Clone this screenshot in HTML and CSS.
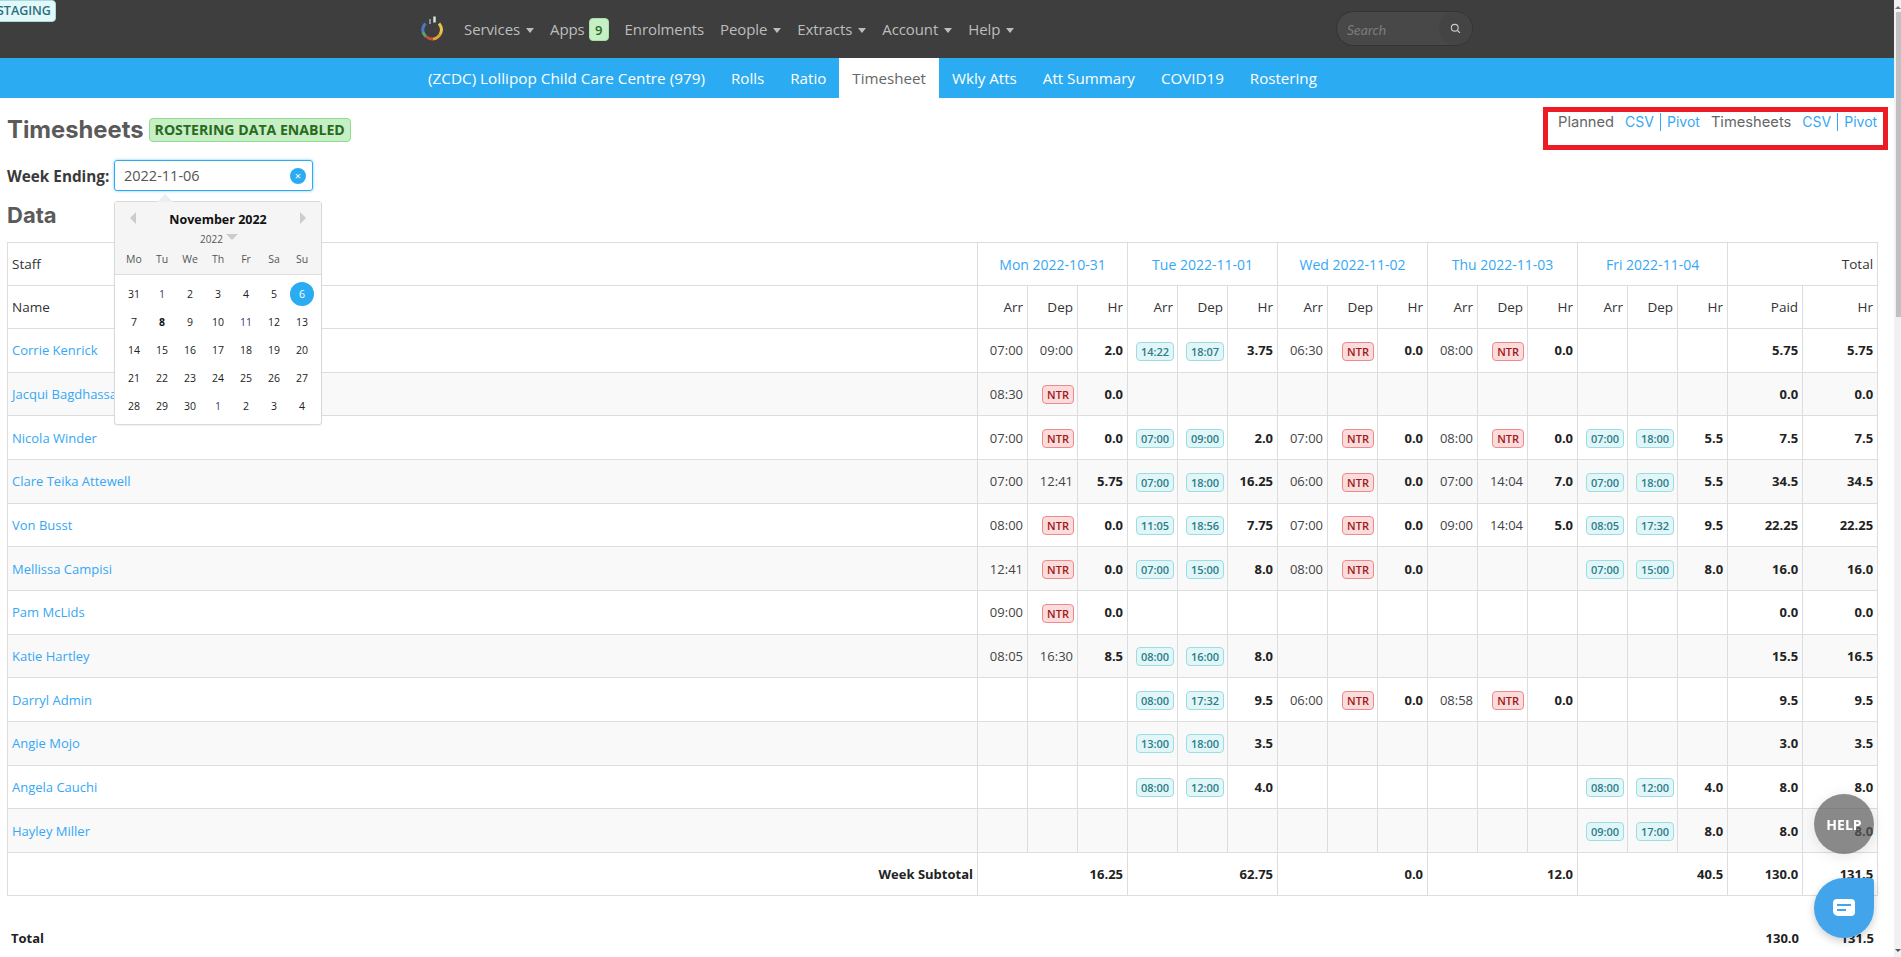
FILE: index.html
```html
<!DOCTYPE html>
<html lang="en">
<head>
<meta charset="utf-8">
<title>Timesheets</title>
<link rel="stylesheet" href="styles.css">
</head>
<body>
<span class="staging">STAGING</span>
<header class="topbar">
  <svg class="logo" viewBox="0 0 24 26" width="24" height="26" aria-hidden="true">
    <path d="M5.5 8.5A9.5 9.5 0 0 0 3 17" fill="none" stroke="#4a78c8" stroke-width="3"/>
    <path d="M3 17A9.5 9.5 0 0 0 6 21.5" fill="none" stroke="#5fa070" stroke-width="3"/>
    <path d="M6 21.5A9.5 9.5 0 0 0 13 24" fill="none" stroke="#c0503a" stroke-width="3"/>
    <path d="M13 24A9.5 9.5 0 0 0 20 19.5" fill="none" stroke="#e8a030" stroke-width="3"/>
    <path d="M20 19.5A9.5 9.5 0 0 0 19 8.5" fill="none" stroke="#e6c44a" stroke-width="3"/>
    <path d="M10 4V9" stroke="#8a8f9a" stroke-width="2" fill="none"/>
    <path d="M14.5 1.5V7.5" stroke="#dfe8df" stroke-width="2.4" fill="none"/>
  </svg>
  <nav class="topnav">
    <a class="topnav-item">Services<i class="caret"></i></a>
    <a class="topnav-item">Apps<b class="count">9</b></a>
    <a class="topnav-item">Enrolments</a>
    <a class="topnav-item">People<i class="caret"></i></a>
    <a class="topnav-item">Extracts<i class="caret"></i></a>
    <a class="topnav-item">Account<i class="caret"></i></a>
    <a class="topnav-item">Help<i class="caret"></i></a>
  </nav>
  <div class="search">
    <span class="search-text">Search</span>
    <span class="search-btn">
      <svg viewBox="0 0 12 12" width="11" height="11" aria-hidden="true"><circle cx="5.2" cy="5.2" r="3.7" fill="none" stroke="#ccc" stroke-width="1.2"/><path d="M8 8l2.8 2.8" stroke="#ccc" stroke-width="1.4"/></svg>
    </span>
  </div>
</header>
<nav class="subnav">
  <a class="subnav-item site">(ZCDC) Lollipop Child Care Centre (979)</a>
  <a class="subnav-item">Rolls</a>
  <a class="subnav-item">Ratio</a>
  <a class="subnav-item active">Timesheet</a>
  <a class="subnav-item">Wkly Atts</a>
  <a class="subnav-item">Att Summary</a>
  <a class="subnav-item">COVID19</a>
  <a class="subnav-item">Rostering</a>
</nav>
<main class="main">
  <div class="title-row">
    <div class="title-left">
      <h1 class="title">Timesheets</h1>
      <span class="enabled">ROSTERING DATA ENABLED</span>
    </div>
    <div class="exports">
      <span class="exp-label">Planned</span>
      <span class="exp-links"><a class="exp-link sep">CSV</a><a class="exp-link">Pivot</a></span>
      <span class="exp-label">Timesheets</span>
      <span class="exp-links"><a class="exp-link sep">CSV</a><a class="exp-link">Pivot</a></span>
    </div>
  </div>
  <div class="week-row">
    <label class="week-label">Week Ending:</label>
    <div class="week-input">
      <span class="week-value">2022-11-06</span>
      <span class="clear">×</span>
      <div class="cal">
        <div class="cal-head">
          <div class="cal-month">
            <i class="arrow-left"></i>
            <span class="cal-title">November 2022</span>
            <i class="arrow-right"></i>
          </div>
          <div class="cal-year">2022<i class="arrow-down"></i></div>
          <div class="cal-grid cal-dow"><span>Mo</span><span>Tu</span><span>We</span><span>Th</span><span>Fr</span><span>Sa</span><span>Su</span></div>
        </div>
        <div class="cal-grid cal-days">
          <span>31</span><span class="pv">1</span><span>2</span><span>3</span><span>4</span><span>5</span><span class="sel">6</span>
          <span>7</span><span class="today">8</span><span>9</span><span>10</span><span class="pv">11</span><span>12</span><span>13</span>
          <span>14</span><span>15</span><span>16</span><span>17</span><span>18</span><span>19</span><span>20</span>
          <span>21</span><span>22</span><span>23</span><span>24</span><span>25</span><span>26</span><span>27</span>
          <span>28</span><span>29</span><span>30</span><span class="pv">1</span><span>2</span><span>3</span><span>4</span>
        </div>
      </div>
    </div>
  </div>
  <h2 class="section">Data</h2>
  <table class="sheet">
    <colgroup><col class="c-name"><col class="c"><col class="c"><col class="c"><col class="c"><col class="c"><col class="c"><col class="c"><col class="c"><col class="c"><col class="c"><col class="c"><col class="c"><col class="c"><col class="c"><col class="c"><col class="c-t"><col class="c-t"></colgroup>
    <thead>
      <tr><th class="l">Staff</th><th class="day" colspan="3">Mon 2022-10-31</th><th class="day" colspan="3">Tue 2022-11-01</th><th class="day" colspan="3">Wed 2022-11-02</th><th class="day" colspan="3">Thu 2022-11-03</th><th class="day" colspan="3">Fri 2022-11-04</th><th colspan="2">Total</th></tr>
      <tr><th class="l">Name</th><th>Arr</th><th>Dep</th><th>Hr</th><th>Arr</th><th>Dep</th><th>Hr</th><th>Arr</th><th>Dep</th><th>Hr</th><th>Arr</th><th>Dep</th><th>Hr</th><th>Arr</th><th>Dep</th><th>Hr</th><th>Paid</th><th>Hr</th></tr>
    </thead>
    <tbody>
      <tr><td class="l"><a class="staff">Corrie Kenrick</a></td><td>07:00</td><td>09:00</td><td class="h">2.0</td><td><span class="t">14:22</span></td><td><span class="t">18:07</span></td><td class="h">3.75</td><td>06:30</td><td><span class="n">NTR</span></td><td class="h">0.0</td><td>08:00</td><td><span class="n">NTR</span></td><td class="h">0.0</td><td></td><td></td><td></td><td class="h">5.75</td><td class="h">5.75</td></tr>
      <tr><td class="l"><a class="staff">Jacqui Bagdhassarian</a></td><td>08:30</td><td><span class="n">NTR</span></td><td class="h">0.0</td><td></td><td></td><td></td><td></td><td></td><td></td><td></td><td></td><td></td><td></td><td></td><td></td><td class="h">0.0</td><td class="h">0.0</td></tr>
      <tr><td class="l"><a class="staff">Nicola Winder</a></td><td>07:00</td><td><span class="n">NTR</span></td><td class="h">0.0</td><td><span class="t">07:00</span></td><td><span class="t">09:00</span></td><td class="h">2.0</td><td>07:00</td><td><span class="n">NTR</span></td><td class="h">0.0</td><td>08:00</td><td><span class="n">NTR</span></td><td class="h">0.0</td><td><span class="t">07:00</span></td><td><span class="t">18:00</span></td><td class="h">5.5</td><td class="h">7.5</td><td class="h">7.5</td></tr>
      <tr><td class="l"><a class="staff">Clare Teika Attewell</a></td><td>07:00</td><td>12:41</td><td class="h">5.75</td><td><span class="t">07:00</span></td><td><span class="t">18:00</span></td><td class="h">16.25</td><td>06:00</td><td><span class="n">NTR</span></td><td class="h">0.0</td><td>07:00</td><td>14:04</td><td class="h">7.0</td><td><span class="t">07:00</span></td><td><span class="t">18:00</span></td><td class="h">5.5</td><td class="h">34.5</td><td class="h">34.5</td></tr>
      <tr><td class="l"><a class="staff">Von Busst</a></td><td>08:00</td><td><span class="n">NTR</span></td><td class="h">0.0</td><td><span class="t">11:05</span></td><td><span class="t">18:56</span></td><td class="h">7.75</td><td>07:00</td><td><span class="n">NTR</span></td><td class="h">0.0</td><td>09:00</td><td>14:04</td><td class="h">5.0</td><td><span class="t">08:05</span></td><td><span class="t">17:32</span></td><td class="h">9.5</td><td class="h">22.25</td><td class="h">22.25</td></tr>
      <tr><td class="l"><a class="staff">Mellissa Campisi</a></td><td>12:41</td><td><span class="n">NTR</span></td><td class="h">0.0</td><td><span class="t">07:00</span></td><td><span class="t">15:00</span></td><td class="h">8.0</td><td>08:00</td><td><span class="n">NTR</span></td><td class="h">0.0</td><td></td><td></td><td></td><td><span class="t">07:00</span></td><td><span class="t">15:00</span></td><td class="h">8.0</td><td class="h">16.0</td><td class="h">16.0</td></tr>
      <tr><td class="l"><a class="staff">Pam McLids</a></td><td>09:00</td><td><span class="n">NTR</span></td><td class="h">0.0</td><td></td><td></td><td></td><td></td><td></td><td></td><td></td><td></td><td></td><td></td><td></td><td></td><td class="h">0.0</td><td class="h">0.0</td></tr>
      <tr><td class="l"><a class="staff">Katie Hartley</a></td><td>08:05</td><td>16:30</td><td class="h">8.5</td><td><span class="t">08:00</span></td><td><span class="t">16:00</span></td><td class="h">8.0</td><td></td><td></td><td></td><td></td><td></td><td></td><td></td><td></td><td></td><td class="h">15.5</td><td class="h">16.5</td></tr>
      <tr><td class="l"><a class="staff">Darryl Admin</a></td><td></td><td></td><td></td><td><span class="t">08:00</span></td><td><span class="t">17:32</span></td><td class="h">9.5</td><td>06:00</td><td><span class="n">NTR</span></td><td class="h">0.0</td><td>08:58</td><td><span class="n">NTR</span></td><td class="h">0.0</td><td></td><td></td><td></td><td class="h">9.5</td><td class="h">9.5</td></tr>
      <tr><td class="l"><a class="staff">Angie Mojo</a></td><td></td><td></td><td></td><td><span class="t">13:00</span></td><td><span class="t">18:00</span></td><td class="h">3.5</td><td></td><td></td><td></td><td></td><td></td><td></td><td></td><td></td><td></td><td class="h">3.0</td><td class="h">3.5</td></tr>
      <tr><td class="l"><a class="staff">Angela Cauchi</a></td><td></td><td></td><td></td><td><span class="t">08:00</span></td><td><span class="t">12:00</span></td><td class="h">4.0</td><td></td><td></td><td></td><td></td><td></td><td></td><td><span class="t">08:00</span></td><td><span class="t">12:00</span></td><td class="h">4.0</td><td class="h">8.0</td><td class="h">8.0</td></tr>
      <tr><td class="l"><a class="staff">Hayley Miller</a></td><td></td><td></td><td></td><td></td><td></td><td></td><td></td><td></td><td></td><td></td><td></td><td></td><td><span class="t">09:00</span></td><td><span class="t">17:00</span></td><td class="h">8.0</td><td class="h">8.0</td><td class="h">8.0</td></tr>
      <tr class="sub"><td class="h">Week Subtotal</td><td class="h" colspan="3">16.25</td><td class="h" colspan="3">62.75</td><td class="h" colspan="3">0.0</td><td class="h" colspan="3">12.0</td><td class="h" colspan="3">40.5</td><td class="h">130.0</td><td class="h">131.5</td></tr>
    </tbody>
  </table>
  <div class="grand">
    <span class="grand-label">Total</span>
    <span class="grand-val">130.0</span>
    <span class="grand-val">131.5</span>
  </div>
</main>
<div class="scrollbar"><i class="sb-up"></i><i class="sb-thumb"></i><i class="sb-down"></i></div>
<button class="help">HELP</button>
<button class="chat" aria-label="Chat">
  <svg viewBox="0 0 24 20" width="24" height="20" aria-hidden="true"><path d="M5 1h14a4 4 0 0 1 4 4v9a4 4 0 0 1-4 4H6a5 5 0 0 1-5-5V5a4 4 0 0 1 4-4z" fill="#fff"/><path d="M5 7h14M5 12h9" stroke="#42a5ec" stroke-width="2"/></svg>
</button>
</body>
</html>
```
FILE: styles.css
```css
* { box-sizing: border-box; }
html, body { margin: 0; height: 957px; overflow: hidden; background: #fff; }
body { font-family: "Open Sans", "Liberation Sans", sans-serif; font-size: 13px; color: #444; width: 1901px; }
a { text-decoration: none; }

.staging { position: absolute; left: -12px; top: 0; z-index: 5; height: 22px; line-height: 20px; padding: 0 4px 0 8px; background: #e4f7f9; border: 1px solid #9fdde3; border-radius: 4px; color: #27717e; font-size: 12.5px; font-weight: 600; }

.topbar { height: 58px; width: 1901px; background: #3e3e3e; display: flex; align-items: center; padding-left: 420px; }
.logo { flex: none; margin-top: -2px; }
.topnav { display: flex; align-items: center; margin-left: 20px; gap: 16px; width: 871px; }
.topnav-item { display: flex; align-items: center; color: #bdbdbd; font-size: 15px; letter-spacing: -0.1px; }
.caret { width: 0; height: 0; margin: 2px 0 0 6px; border-left: 4px solid transparent; border-right: 4px solid transparent; border-top: 5px solid #bdbdbd; }
.count { display: block; width: 20px; height: 23px; margin-left: 4px; line-height: 23px; text-align: center; background: #c6efc6; border: 1px solid #a6e3a6; border-radius: 4px; color: #2a6a1d; font-size: 13px; font-weight: 600; }
.search { width: 137px; height: 35px; margin: -1px 0 0 1px; display: flex; align-items: center; justify-content: space-between; background: #484848; border: 1px solid #333; border-radius: 18px; padding-left: 10px; }
.search-text { color: #7c7c7c; font-size: 14px; font-style: italic; font-family: "Lato", sans-serif; margin-top: 2px; }
.search-btn { width: 33px; height: 33px; display: flex; align-items: center; justify-content: center; border-radius: 50%; background: #444; }

.subnav { height: 40px; width: 1894px; background: #2babf1; display: flex; padding-left: 415px; }
.subnav-item { padding: 0 13px; line-height: 40px; color: #fff; font-size: 15.15px; white-space: nowrap; }
.subnav-item.site { font-size: 15.3px; }
.subnav-item.active { background: #fff; color: #666; }

.main { width: 1894px; padding: 0 16px 0 7px; }
.title-row { display: flex; justify-content: space-between; align-items: flex-start; height: 62px; margin-right: -10px; }
.title-left { display: flex; align-items: center; gap: 5px; margin-top: 20px; }
.title { margin: 0; font-family: "Inter", sans-serif; font-size: 23.8px; font-weight: 700; color: #5a5a5a; line-height: 24px; }
.enabled { height: 24px; line-height: 22px; padding: 0 5px; background: #c6efc6; border: 1px solid #8fdc8f; border-radius: 4px; color: #2a6a1d; font-size: 14.1px; font-weight: 700; white-space: nowrap; }
.exports { margin-top: 9px; width: 345px; height: 43px; padding: 0 0 0 10px; border: 5px solid #ed1c24; display: flex; align-items: flex-start; font-family: "Inter", sans-serif; font-size: 14.7px; line-height: 20px; color: #666; gap: 11px; white-space: nowrap; }
.exp-links { display: flex; align-items: center; height: 20px; font-size: 14px; }
.exp-link { color: #36a7f5; }
.exp-link.sep { height: 18px; line-height: 18px; padding-right: 6px; margin-right: 6px; border-right: 1px solid #36a7f5; }

.week-row { display: flex; align-items: center; height: 31px; }
.week-label { width: 107px; font-weight: 700; font-size: 15.3px; color: #3a3a3a; white-space: nowrap; }
.week-input { position: relative; width: 199px; height: 31px; display: flex; align-items: center; justify-content: space-between; padding: 0 6px 0 9px; border: 1px solid #2babf1; border-radius: 3px; box-shadow: 0 0 3px #7ccbf5; }
.week-value { font-size: 14.5px; color: #555; }
.clear { width: 16px; height: 16px; border-radius: 50%; background: #2babf1; color: #fff; font-size: 11px; line-height: 15px; text-align: center; }

.cal { position: absolute; left: -1px; top: 40px; z-index: 4; width: 208px; height: 224px; background: #fff; border: 1px solid #d9d9d9; border-radius: 3px; box-shadow: 0 1px 2px rgba(0,0,0,.06); }
.cal::before { content: ""; position: absolute; left: 42px; top: -8px; border-left: 8px solid transparent; border-right: 8px solid transparent; border-bottom: 8px solid #eee; }
.cal-head { height: 73px; background: #f5f5f5; border-bottom: 1px solid #ddd; padding-top: 8px; }
.cal-month { display: flex; align-items: center; justify-content: space-between; padding: 0 15px; height: 18px; }
.cal-title { font-size: 12.5px; font-weight: 700; color: #111; }
.arrow-left, .arrow-right { width: 0; height: 0; border-top: 6px solid transparent; border-bottom: 6px solid transparent; margin-top: -2px; }
.arrow-left { border-right: 6px solid #ccc; }
.arrow-right { border-left: 6px solid #ccc; }
.cal-year { display: flex; justify-content: center; align-items: flex-start; height: 14px; font-size: 10px; line-height: 14px; color: #555; padding-left: 2px; margin-top: 4px; }
.arrow-down { width: 0; height: 0; margin: 2px 0 0 3px; border-left: 6px solid transparent; border-right: 6px solid transparent; border-top: 6px solid #ccc; }
.cal-grid { display: grid; grid-template-columns: repeat(7, 28px); padding-left: 5px; text-align: center; }
.cal-dow { font-size: 10.5px; line-height: 16px; color: #555; margin-top: 5px; }
.cal-days { grid-auto-rows: 28px; font-size: 10.5px; line-height: 24px; color: #222; padding-top: 7px; }
.cal-days span { height: 24px; width: 24px; margin: 0 2px; }
.cal-days .pv { color: #3a3a7a; }
.cal-days .today { font-weight: 700; color: #111; }
.cal-days .sel { background: #2babf1; color: #fff; border-radius: 50%; }

.section { margin: 9px 0 12px; height: 30px; font-family: "Inter", sans-serif; font-size: 22px; line-height: 30px; font-weight: 700; color: #5a5a5a; }

.sheet { width: 1870px; table-layout: fixed; border-collapse: collapse; border: 1px solid #ddd; font-size: 13px; }
.c-name { width: 970px; }
.c { width: 50px; }
.c-t { width: 75px; }
.sheet th, .sheet td { height: 43.67px; padding: 0 4px; border: 1px solid #ddd; text-align: right; white-space: nowrap; overflow: hidden; font-weight: 400; }
.sheet th { height: 43px; font-weight: 500; color: #333; font-size: 13.5px; }
.sheet .l { text-align: left; }
.sheet th.day { text-align: center; color: #36a7f5; font-weight: 500; font-size: 14px; }
.sheet tbody tr:nth-child(even) { background: #f9f9f9; }
.sheet .sub td { height: 43px; }
.sheet .h { font-weight: 700; color: #222; }
.staff { color: #36a7f5; }
.t, .n { display: inline-block; text-align: center; line-height: 17px; border-radius: 4px; font-size: 11px; font-weight: 600; vertical-align: middle; margin: 1px -1px 0 0; }
.t { width: 38px; height: 19px; background: #e2f6f8; border: 1px solid #9bdde4; color: #2a7d8a; }
.n { width: 32px; height: 19px; background: #fbdcdc; border: 1px solid #f08a8a; color: #a01818; }

.grand { display: flex; align-items: center; height: 40px; margin-top: 22px; font-weight: 700; color: #222; }
.grand-label { flex: 1; padding-left: 4px; }
.grand-val { width: 75px; text-align: right; padding-right: 4px; }

.scrollbar { position: fixed; right: 0; top: 0; width: 7px; height: 957px; background: #f1f1f1; display: flex; flex-direction: column; align-items: flex-end; }
.sb-up { width: 0; height: 0; margin: 6px 0 3px; border-left: 3px solid transparent; border-right: 3px solid transparent; border-bottom: 3px solid #777; }
.sb-thumb { width: 5px; height: 305px; background: #c1c1c1; }
.sb-down { width: 0; height: 0; margin-top: auto; margin-bottom: 5px; border-left: 3px solid transparent; border-right: 3px solid transparent; border-top: 3px solid #555; }

.help { position: fixed; left: 1814px; top: 794px; width: 60px; height: 60px; border: 0; border-radius: 50%; background: rgba(90,90,90,.7); box-shadow: 0 2px 14px rgba(0,0,0,.1); color: #fff; font-family: "Open Sans", sans-serif; font-size: 14px; font-weight: 700; padding: 0; z-index: 6; }
.chat { position: fixed; left: 1814px; top: 878px; width: 60px; height: 60px; border: 0; border-radius: 50% 4px 50% 50%; background: #42a5ec; box-shadow: 0 3px 8px rgba(0,0,0,.2); padding: 0; display: flex; align-items: center; justify-content: center; z-index: 6; }
```
